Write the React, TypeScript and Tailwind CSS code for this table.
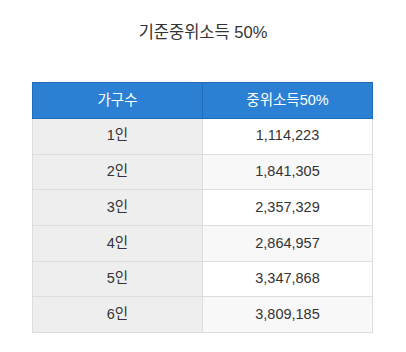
const rows = [
  ["1인", "1,114,223"],
  ["2인", "1,841,305"],
  ["3인", "2,357,329"],
  ["4인", "2,864,957"],
  ["5인", "3,347,868"],
  ["6인", "3,809,185"],
];

export default function App() {
  return (
    <div className="w-[406px] h-[352px] bg-white text-[#333] font-['Liberation_Sans','Noto_Sans_CJK_KR',sans-serif]">
      {/* Title */}
      <h2 className="pt-[21px] h-[82px] text-center text-[16.5px] leading-[22px] font-normal">
        기준중위소득 50%
      </h2>

      <table className="ml-[32px] w-[341px] border-collapse text-[14.5px] text-center">
        <thead>
          <tr className="h-[36px] bg-[#2b80d4] text-white">
            <th className="w-[170px] border border-[#1f6cbd] font-normal">가구수</th>
            <th className="border border-[#1f6cbd] font-normal">중위소득50%</th>
          </tr>
        </thead>
        <tbody>
          {rows.map(([size, amount], idx) => (
            <tr key={size} className="h-[35.7px]">
              <td className="border border-[#dddddd] bg-[#eeeeee]">{size}</td>
              <td
                className={
                  idx % 2 === 0
                    ? "border border-[#dddddd] bg-white"
                    : "border border-[#dddddd] bg-[#f8f8f8]"
                }
              >
                {amount}
              </td>
            </tr>
          ))}
        </tbody>
      </table>
    </div>
  );
}
